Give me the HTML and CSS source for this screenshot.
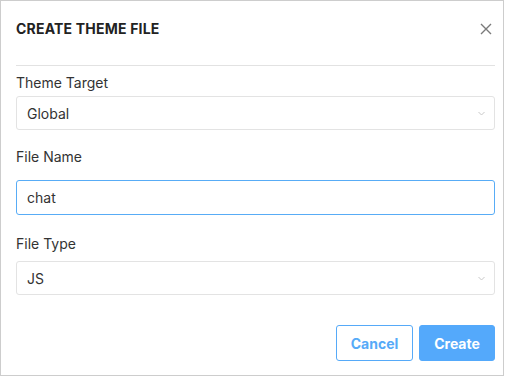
FILE: index.html
```html
<!DOCTYPE html>
<html lang="en">
<head>
    <meta charset="UTF-8">
    <meta name="viewport" content="width=device-width, initial-scale=1.0">
    <title>Create Theme File</title>
    <link rel="stylesheet" href="styles.css">
</head>
<body>
    <div class="modal">
        <div class="modal-header">
            <h2>CREATE THEME FILE</h2>
            <button class="close" aria-label="Close">
                <svg width="12" height="12" viewBox="0 0 12 12">
                    <path d="M1 1 L11 11 M11 1 L1 11" stroke="#7a7a7a" stroke-width="1.4" fill="none"/>
                </svg>
            </button>
        </div>

        <form class="modal-body">
            <label class="label label-first" for="target">Theme Target</label>
            <div class="select-wrap">
                <select id="target" class="field">
                    <option>Global</option>
                </select>
                <svg class="chevron" width="7" height="5" viewBox="0 0 7 5">
                    <path d="M0.5 1 L3.5 4 L6.5 1" stroke="#c8c8c8" stroke-width="1" fill="none"/>
                </svg>
            </div>

            <label class="label label-name" for="name">File Name</label>
            <input id="name" class="field field-focus" type="text" value="chat">

            <label class="label label-type" for="type">File Type</label>
            <div class="select-wrap">
                <select id="type" class="field">
                    <option>JS</option>
                </select>
                <svg class="chevron" width="7" height="5" viewBox="0 0 7 5">
                    <path d="M0.5 1 L3.5 4 L6.5 1" stroke="#c8c8c8" stroke-width="1" fill="none"/>
                </svg>
            </div>

            <div class="actions">
                <button type="button" class="btn btn-outline">Cancel</button>
                <button type="button" class="btn btn-primary">Create</button>
            </div>
        </form>
    </div>
</body>
</html>
```

FILE: styles.css
```css
* {
    margin: 0;
    padding: 0;
    box-sizing: border-box;
}

body {
    font-family: Inter, "Noto Sans", sans-serif;
    background: #fff;
    color: #333;
}

.modal {
    width: 504px;
    height: 376px;
    border: 1px solid #cdcdcd;
    padding: 0 8px 0 15px;
    background: #fff;
}

.modal-header {
    display: flex;
    align-items: center;
    justify-content: space-between;
    padding: 18px 0 26px;
    border-bottom: 1px solid #e2e2e2;
}

.modal-header h2 {
    font-size: 14px;
    line-height: 20px;
    font-weight: 700;
    letter-spacing: 0.2px;
    color: #222;
}

.close {
    background: none;
    border: none;
    width: 12px;
    height: 12px;
    margin-right: 3px;
    display: flex;
    cursor: pointer;
}

.modal-body {
    display: flex;
    flex-direction: column;
}

.label {
    font-size: 14px;
    line-height: 20px;
    color: #333;
}

.label-first {
    margin: 7px 0 3px;
}

.label-name {
    margin: 17px 0 13px;
}

.label-type {
    margin: 19px 0 7px;
}

.select-wrap {
    position: relative;
}

.field {
    width: 100%;
    height: 34px;
    border: 1px solid #e3e3e3;
    border-radius: 3px;
    padding: 0 10px;
    font-family: inherit;
    font-size: 14px;
    color: #333;
    background: #fff;
    appearance: none;
    outline: none;
}

.field-focus {
    height: 35px;
    border-color: #58acf6;
}

.chevron {
    position: absolute;
    right: 10px;
    top: 15px;
    pointer-events: none;
}

.actions {
    display: flex;
    justify-content: flex-end;
    gap: 6px;
    margin-top: 30px;
}

.btn {
    height: 36px;
    border-radius: 3px;
    font-family: inherit;
    font-size: 14px;
    font-weight: 700;
    cursor: pointer;
}

.btn-outline {
    width: 77px;
    background: #fff;
    border: 1px solid #56aaf8;
    color: #56aaf8;
}

.btn-primary {
    width: 76px;
    background: #54a9fb;
    border: 1px solid #54a9fb;
    color: #fff;
}
```
